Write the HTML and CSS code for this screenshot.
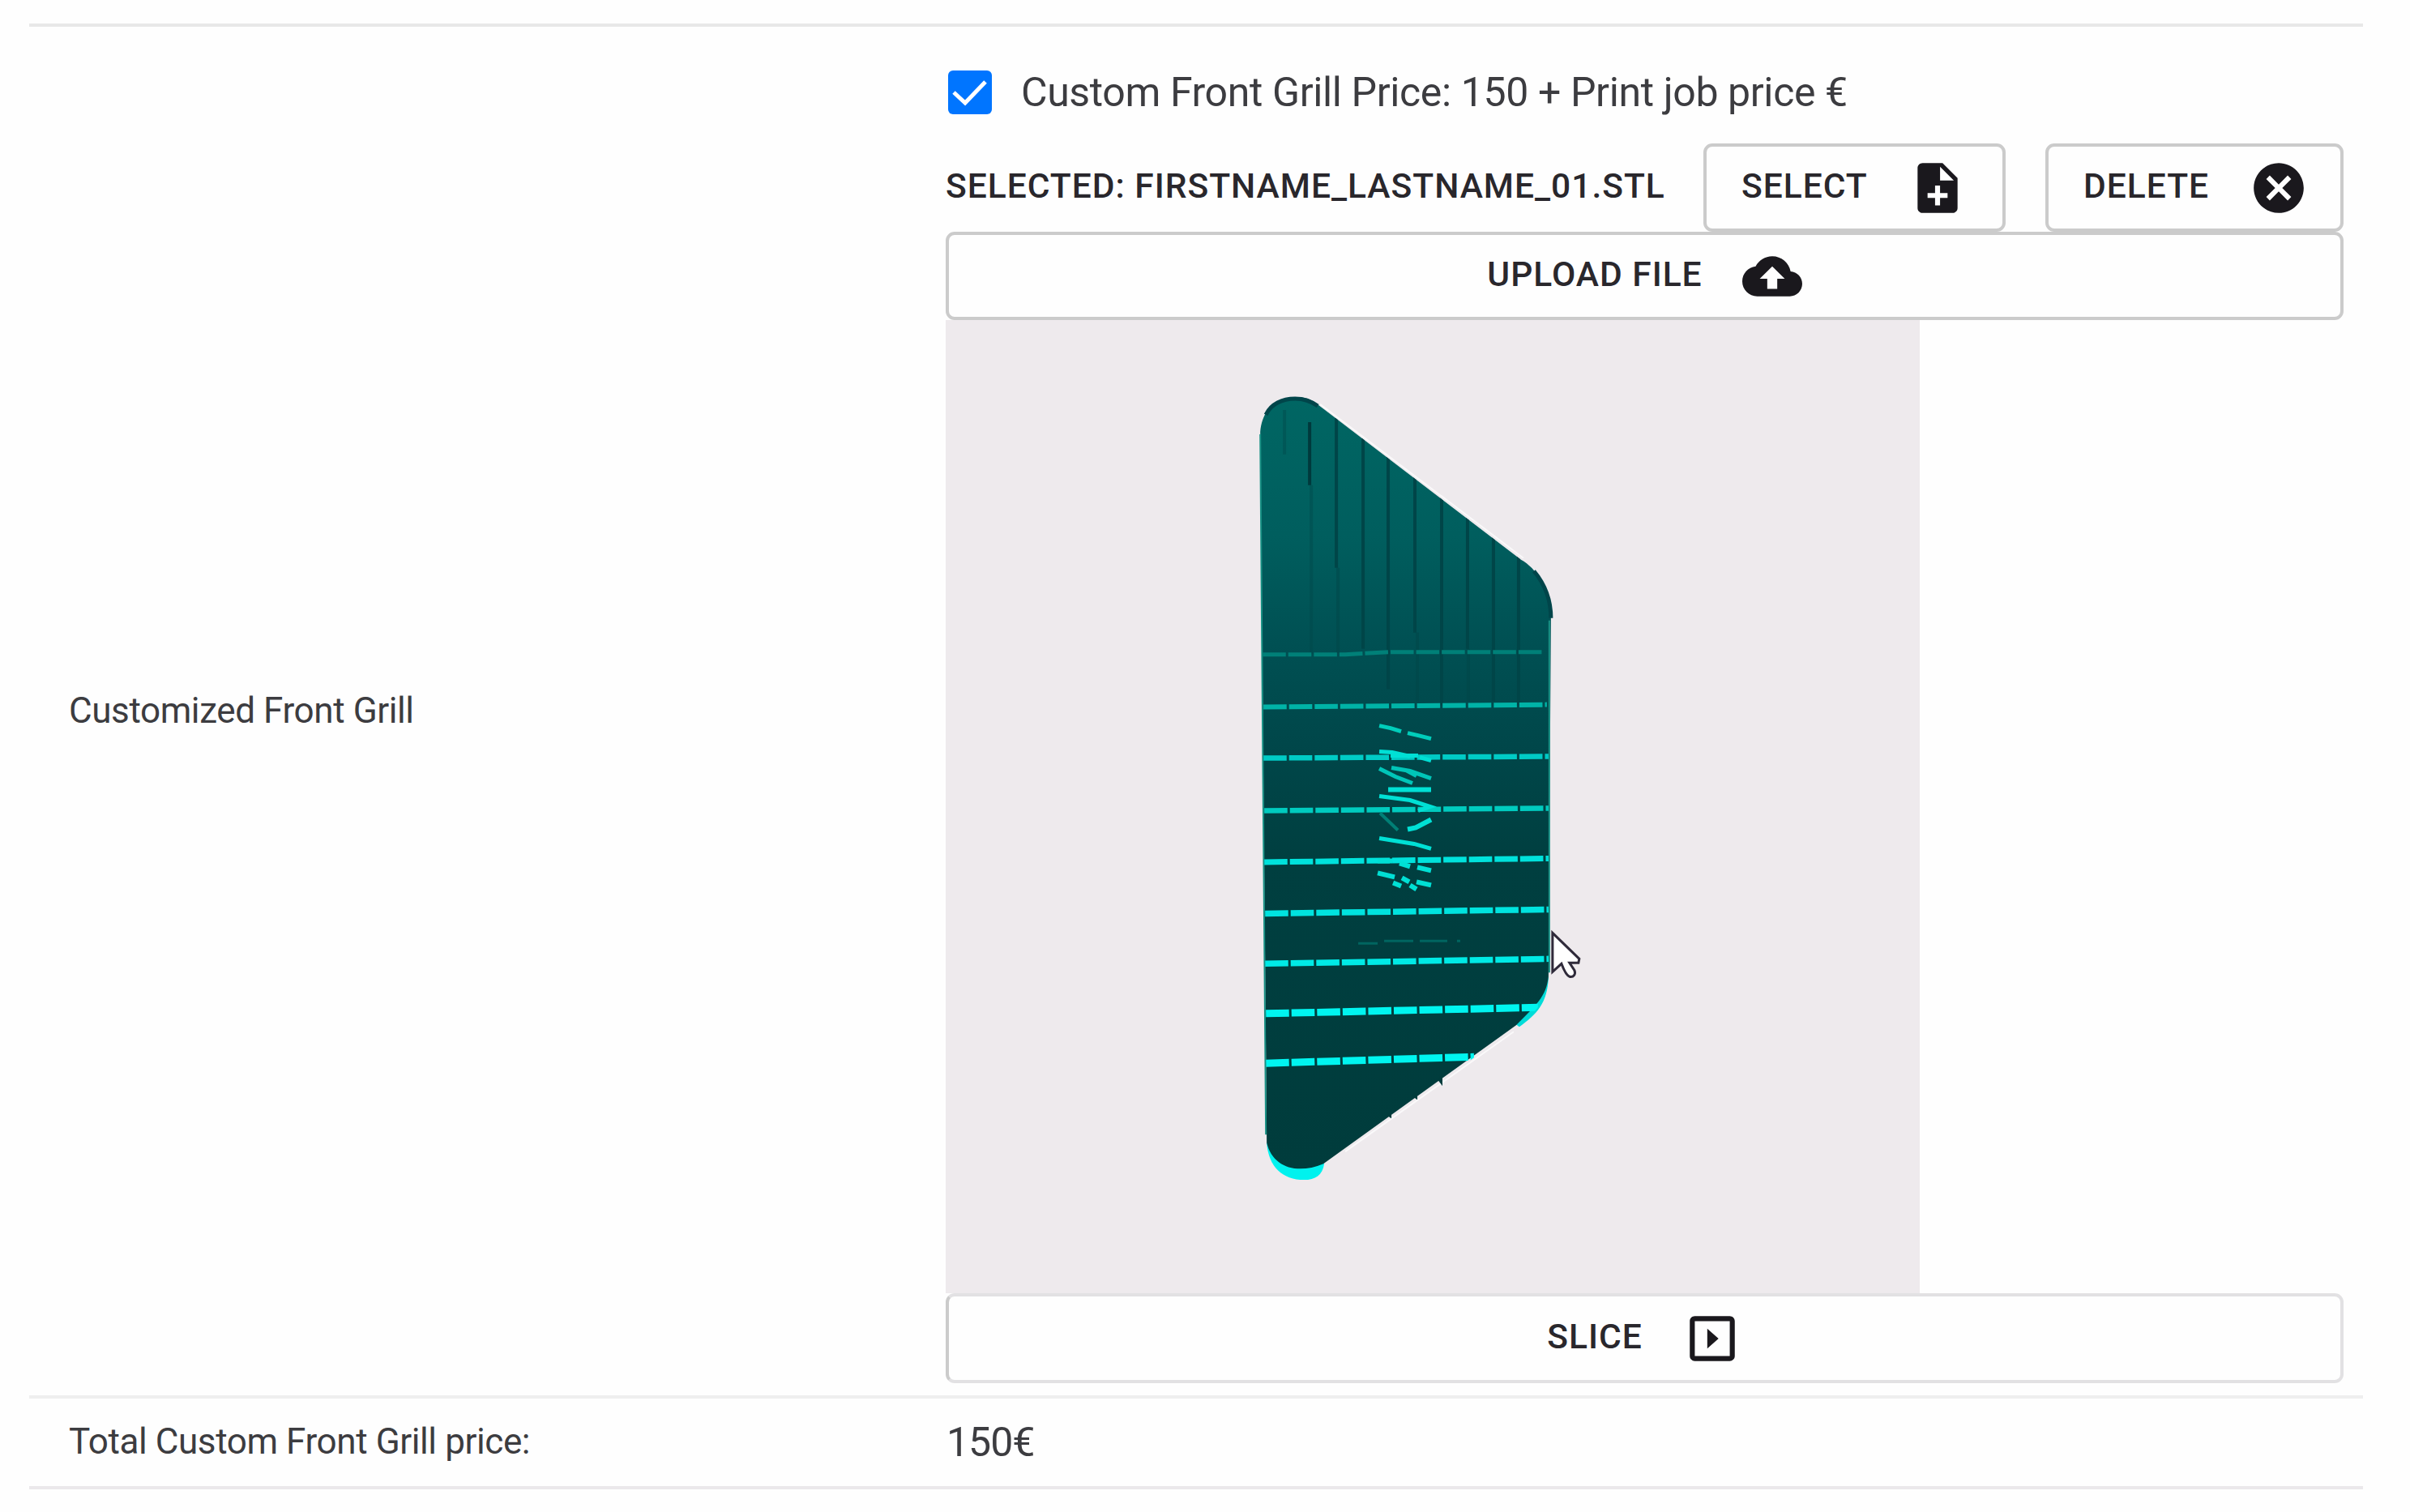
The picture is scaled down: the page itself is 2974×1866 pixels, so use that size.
FILE: index.html
```html
<!DOCTYPE html>
<html lang="en">
<head>
    <meta charset="UTF-8">
    <meta name="viewport" content="width=device-width, initial-scale=1.0">
    <title>Customized Front Grill</title>
    <link rel="stylesheet" href="styles.css">
</head>
<body>
    <div class="table">
        <div class="row row-grill">
            <div class="name">Customized Front Grill</div>
            <div class="options">
                <label class="check">
                    <input type="checkbox" class="check-input" checked>
                    <span class="check-box">
                        <svg viewBox="0 0 54 54"><path d="M7 27L21 40L46 14"/></svg>
                    </span>
                    <span class="check-label">Custom Front Grill Price: 150 + Print job price €</span>
                </label>
                <div class="file">
                    <span class="file-name">Selected: Firstname_Lastname_01.stl</span>
                    <button class="btn btn-select">
                        <span>Select</span>
                        <svg class="icon" viewBox="0 0 24 24"><path fill-rule="evenodd" d="M14 2H6C4.890 2 4 2.900 4 4V20C4 21.100 4.890 22 6 22H18C19.110 22 20 21.100 20 20V8L14 2M13 3.500L18.500 9H13V3.500M11 11H13V14H16V16H13V19H11V16H8V14H11V11Z"/></svg>
                    </button>
                    <button class="btn btn-delete">
                        <span>Delete</span>
                        <svg class="icon" viewBox="0 0 24 24"><path d="M12 2C6.470 2 2 6.470 2 12s4.470 10 10 10 10-4.470 10-10S17.530 2 12 2zm5 13.590L15.590 17 12 13.410 8.410 17 7 15.590 10.590 12 7 8.410 8.410 7 12 10.590 15.590 7 17 8.410 13.410 12 17 15.590z"/></svg>
                    </button>
                </div>
                <button class="btn btn-wide">
                    <span>Upload file</span>
                    <svg class="icon" viewBox="0 0 24 24"><path d="M19.350 10.040C18.670 6.590 15.640 4 12 4 9.110 4 6.600 5.640 5.350 8.040 2.340 8.360 0 10.910 0 14c0 3.310 2.690 6 6 6h13c2.760 0 5-2.240 5-5 0-2.640-2.050-4.780-4.650-4.960zM14 13v4h-4v-4H7l5-5 5 5h-3z"/></svg>
                </button>
                <svg class="viewer" viewBox="1167 394 1202 1202">
                    <defs>
                        <linearGradient id="body" x1="0" y1="0" x2="0" y2="1">
                            <stop offset="0" stop-color="#006663"/>
                            <stop offset="0.18" stop-color="#005e5e"/>
                            <stop offset="0.32" stop-color="#005053"/>
                            <stop offset="0.45" stop-color="#00474a"/>
                            <stop offset="0.6" stop-color="#003f40"/>
                            <stop offset="1" stop-color="#003c3c"/>
                        </linearGradient>
                        <clipPath id="shape">
                            <path d="M1555 532C1557 505 1575 489 1598 489C1611 489 1619 492 1627 499L1877 690C1896 700 1914 728 1914 764L1911 1205C1910 1232 1896 1250 1872 1267L1633 1438C1608 1449 1572 1440 1563 1415Z"/>
                        </clipPath>
                    </defs>
                    <path fill="#00f2ee" d="M1563 1410C1565 1440 1583 1456 1609 1456C1623 1456 1632 1450 1634 1436Z"/>
                    <path fill="#00dcd8" d="M1911 1205C1910 1238 1896 1252 1875 1267L1868 1262L1900 1220Z"/>
                    <path fill="url(#body)" d="M1555 532C1557 505 1575 489 1598 489C1611 489 1619 492 1627 499L1877 690C1896 700 1914 728 1914 764L1911 1205C1908 1230 1896 1240 1871 1265L1633 1436C1600 1450 1570 1440 1563 1410Z"/>
                    <!-- ribs on the slanted part -->
                    <g clip-path="url(#shape)" fill="none" stroke="#004548" stroke-width="4">
                        <path stroke="#00393c" d="M1616 520V598"/>
                        <path opacity=".4" d="M1618 598V806M1585 505V560"/>
                        <path d="M1649 515V700M1682 540V800M1713 560V850M1746 585V780M1779 610V870M1811 635V800M1843 660V865M1874 680V870"/>
                        <path opacity=".5" d="M1651 700V805M1749 780V865M1812 800V865"/>
                    </g>
                    <path fill="none" stroke="#00454a" stroke-width="5" d="M1562 511C1568 498 1582 491 1598 491C1611 491 1619 495 1626 500M1893 704C1908 722 1914 740 1914 762"/>
                    <path fill="none" stroke="#189084" stroke-width="2" d="M1555 535L1562 1400M1912 765V1200"/>
                    <path fill="none" stroke="#ffffff" stroke-width="2" opacity=".7" d="M1629 498L1880 688M1660 1421L1868 1273"/>
                    <path fill="#003c3c" d="M1774 1332L1780 1340V1325ZM1742 1352L1749 1357V1345ZM1711 1376L1717 1380V1370Z"/>
                    <!-- slats -->
                    <g class="slats" clip-path="url(#shape)">
                        <path stroke="#008078" stroke-width="5" d="M1558 807L1660 807L1716 804L1904 804"/>
                        <path stroke="#00b3a7" stroke-width="6" d="M1559 872L1909 869"/>
                        <path stroke="#00cbc6" stroke-width="6.500" d="M1559 935L1911 933"/>
                        <path stroke="#00cbbf" stroke-width="6.500" d="M1560 1000L1911 997"/>
                        <path stroke="#00e2dc" stroke-width="7" d="M1560 1063.500L1911 1059"/>
                        <path stroke="#00e3df" stroke-width="7.500" d="M1561 1127L1911 1122"/>
                        <path stroke="#00eae6" stroke-width="7.500" d="M1561 1189L1911 1183"/>
                        <path stroke="#00f5f0" stroke-width="9" d="M1562 1250.500L1898 1243"/>
                        <path stroke="#00f5f0" stroke-width="9" d="M1562 1312L1819 1304"/>
                    </g>
                    <!-- engraved lettering -->
                    <g fill="none" stroke="#00e0d5" stroke-width="5">
                        <path stroke="#00cdbb" d="M1702 895L1716 898L1729 902M1737 904L1750 907L1766 911"/>
                        <path d="M1702 927L1718 928L1740 933M1716 932H1750M1752 934L1766 938"/>
                        <path stroke="#00c5b8" d="M1702 948L1722 958L1743 966M1717 947L1740 951L1766 960M1735 950L1748 957"/>
                        <path stroke-width="6" d="M1713 974H1766"/>
                        <path d="M1702 982L1740 987L1765 995L1750 1000"/>
                        <path stroke="#007f76" stroke-width="4" d="M1703 1003L1725 1024"/>
                        <path stroke-width="6" d="M1737 1023L1747 1021L1766 1011"/>
                        <path d="M1702 1034L1745 1041L1766 1047"/>
                        <path stroke-width="6" d="M1700 1062L1718 1062M1727 1065L1740 1069M1749 1070L1766 1074M1700 1077L1721 1082M1719 1089L1729 1093M1730 1083L1739 1088M1748 1088L1766 1092M1740 1092L1748 1097"/>
                        <path stroke="#006560" stroke-width="3" d="M1676 1164H1700M1708 1161H1744M1752 1161H1786M1798 1161H1802"/>
                    </g>
                    <!-- pointer -->
                    <path fill="#fff" stroke="#2f2a3a" stroke-width="3" d="M1916 1151V1199L1927 1189C1930 1197 1934 1204 1937 1205C1942 1206 1945 1202 1943 1197L1937 1188H1948L1949 1183Z"/>
                </svg>
                <button class="btn btn-wide btn-slice">
                    <span>Slice</span>
                    <svg class="icon" viewBox="0 0 24 24"><path fill-rule="evenodd" d="M19 3H5C3.890 3 3 3.900 3 5V19C3 20.100 3.890 21 5 21H19C20.110 21 21 20.100 21 19V5C21 3.900 20.110 3 19 3M19 19H5V5H19V19M10 8V16L14.500 12Z"/></svg>
                </button>
            </div>
        </div>
        <div class="row row-total">
            <div class="name">Total Custom Front Grill price:</div>
            <div class="price">150€</div>
        </div>
    </div>
</body>
</html>
```

FILE: styles.css
```css
* {
    box-sizing: border-box;
}
body {
    margin: 0;
    background: #fefefe;
    color: #3c3c40;
    font-family: Roboto, sans-serif;
}
.table {
    width: 2880px;
    margin: 29px 0 0 36px;
    border-top: 4px solid #e8e8e8;
}
.row {
    display: grid;
    grid-template-columns: 1131px 1725px;
    align-items: center;
}
.row-grill {
    height: 1693px;
    border-bottom: 4px solid #efefef;
}
.row-total {
    height: 112px;
    border-bottom: 4px solid #ebe8eb;
}
.name {
    padding: 0 0 2px 49px;
    font-size: 44px;
    line-height: 60px;
    letter-spacing: -0.4px;
    white-space: nowrap;
}
.options {
    display: flex;
    flex-direction: column;
    align-self: start;
    padding-top: 54px;
}
.check {
    display: flex;
    align-items: center;
    height: 54px;
    margin: 0 0 36px 3px;
    font-size: 50px;
    letter-spacing: -0.38px;
}
.check-input {
    display: none;
}
.check-box {
    width: 54px;
    height: 54px;
    border-radius: 6px;
    background: #0075ff;
}
.check-box svg {
    display: block;
    fill: none;
    stroke: #fff;
    stroke-width: 5;
}
.check-label {
    margin-left: 36px;
    white-space: nowrap;
}
.file {
    display: flex;
    align-items: center;
    height: 109px;
}
.file-name,
.btn {
    color: #29272c;
    font-family: Roboto, sans-serif;
    font-size: 42.5px;
    font-weight: 500;
    letter-spacing: 1px;
    text-transform: uppercase;
    white-space: nowrap;
}
.file-name {
    width: 935px;
    padding: 0 0 4px 0;
}
.btn {
    display: flex;
    align-items: center;
    gap: 49px;
    height: 109px;
    padding: 0;
    border: 4px solid #cbcbcb;
    border-radius: 11px;
    background: #fefefe;
}
.btn span {
    padding-bottom: 4px;
}
.icon {
    width: 74px;
    height: 74px;
    fill: #1a181d;
}
.btn-select {
    width: 373px;
    padding-left: 43px;
}
.btn-delete {
    width: 368px;
    margin-left: 49px;
    padding-left: 43px;
}
.btn-wide {
    width: 1725px;
    justify-content: center;
}
.viewer {
    display: block;
    width: 1202px;
    height: 1201px;
    background: #eeeaed;
}
.slats {
    fill: none;
    stroke-dasharray: 28.6 3;
}
.btn-slice {
    height: 111px;
    border-color: #e2e1e3;
    border-left-color: #cbcbcb;
}
.price {
    padding-left: 1px;
    font-size: 50px;
    letter-spacing: -1px;
}
```
